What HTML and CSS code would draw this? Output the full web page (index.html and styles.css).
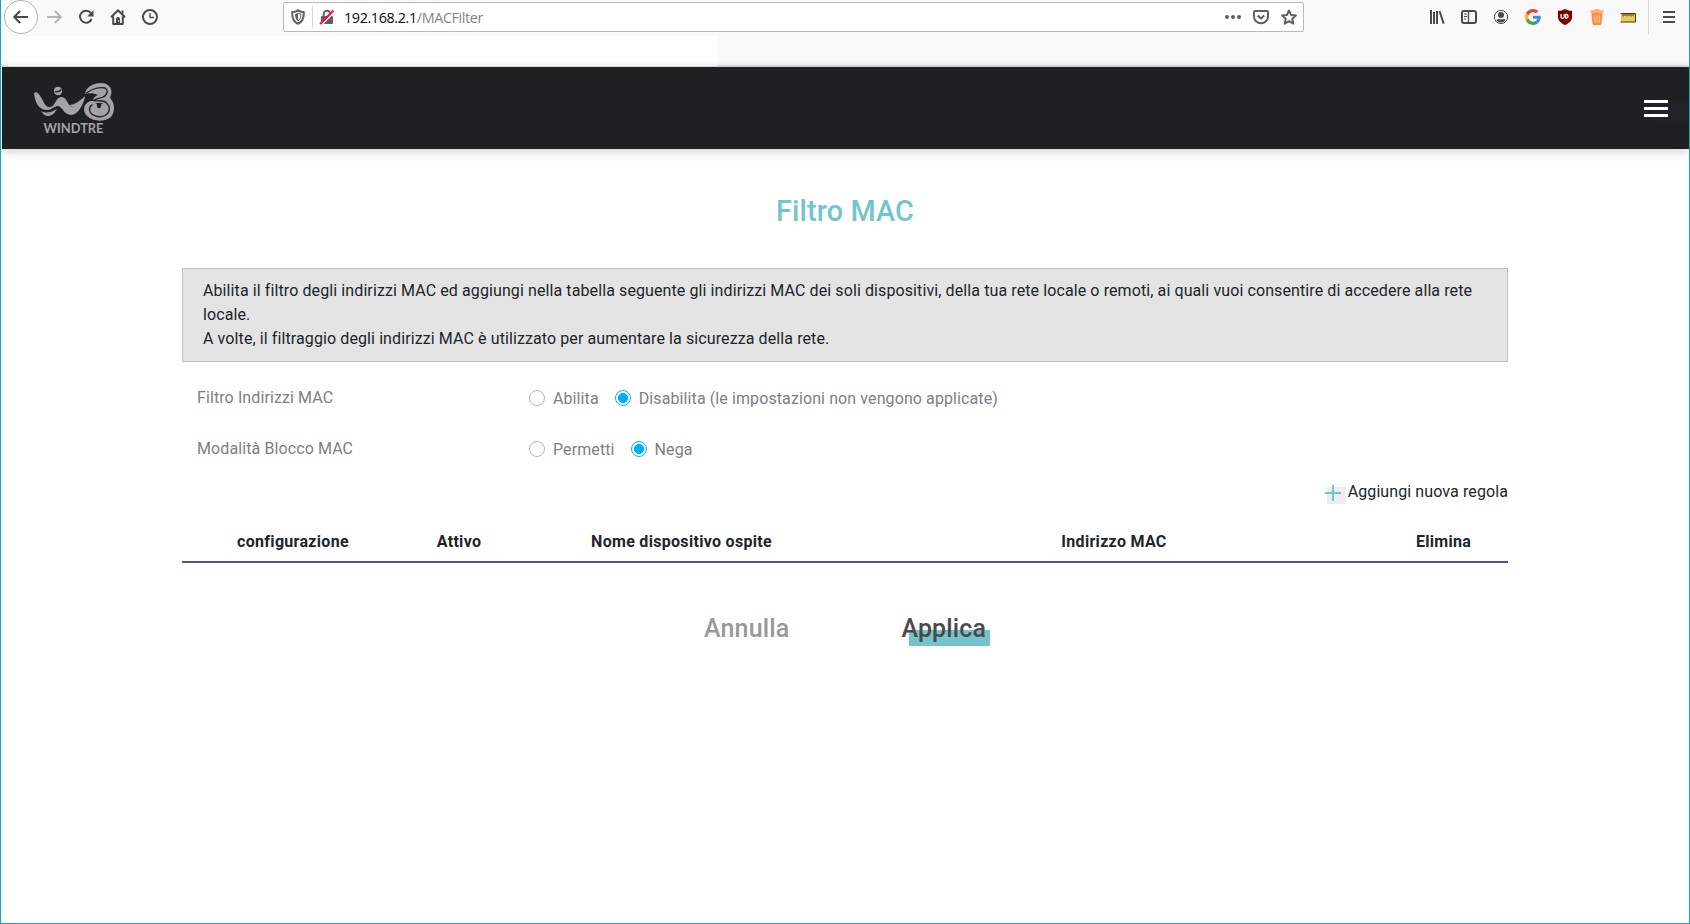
FILE: index.html
```html
<!DOCTYPE html>
<html lang="it">
<head>
<meta charset="utf-8">
<title>Filtro MAC</title>
<link rel="stylesheet" href="styles.css">
</head>
<body>
<div class="window">
  <div class="toolbar">
    <div class="nav">
      <span class="back"><svg width="16" height="16" viewBox="0 0 16 16"><path d="M15 8H1.5M7.2 2L1.2 8l6 6" class="ln"/></svg></span>
      <svg class="fwd" width="16" height="16" viewBox="0 0 16 16"><path d="M1 8h13.5M8.800 2l6 6-6 6" class="ln"/></svg>
      <svg width="16" height="16" viewBox="0 0 16 16"><path d="M12.900 4.200A6 6 0 1 0 13.600 10" class="ln"/><path d="M15.500 1v6.500H9z" fill="#4a4a4a"/></svg>
      <svg width="16" height="16" viewBox="0 0 16 16"><path d="M1 8.300L8 1.300l7 7M3.200 7.500V15h9.600V7.500" class="ln"/><path d="M6 15V9.500q0-1.500 2-1.500t2 1.500V15z" fill="#4a4a4a"/><path d="M11.500 1.500h2v3h-2z" fill="#4a4a4a"/><circle cx="8.700" cy="12" r=".7" fill="#fff"/></svg>
      <svg width="16" height="16" viewBox="0 0 16 16"><circle cx="8" cy="8" r="7" class="ln"/><path d="M8 4v4.500h4" class="ln thin"/></svg>
    </div>
    <div class="urlbar">
      <svg class="shield" width="14" height="16" viewBox="0 0 14 16"><path d="M7 1.300C5 2.600 3 3 1.200 3 1 8.800 2.600 13 7 14.700 11.400 13 13 8.800 12.800 3 11 3 9 2.600 7 1.300z" class="gl"/><path d="M7 4v8C4.600 10.500 4 8 4 5z" fill="#606060"/><path d="M7 4.200C8 4.700 9 5 10 5c0 3-.6 5.500-3 7" fill="none" stroke="#606060"/></svg>
      <span class="sep"></span>
      <svg class="lock" width="16" height="16" viewBox="0 0 16 16"><path d="M4.700 7V5a3.300 3.300 0 0 1 6.600 0v2" class="gl"/><rect x="2" y="7" width="12" height="8" rx="1" fill="#606060"/><path d="M2.500 16L16 2.500" stroke="#fff" stroke-width="1.500"/><path d="M1 15L14.500 1.500" stroke="#ff0f50" stroke-width="2"/></svg>
      <span class="url"><b>192.168.2.1</b>/MACFilter</span>
      <span class="grow"></span>
      <svg class="dots" width="16" height="16" viewBox="0 0 16 16"><circle cx="2" cy="8" r="2"/><circle cx="8" cy="8" r="2"/><circle cx="14" cy="8" r="2"/></svg>
      <svg class="pocket" width="16" height="16" viewBox="0 0 16 16"><path d="M2 2h12q1 0 1 1v4.500a7 6.800 0 0 1-14 0V3q0-1 1-1z" class="gl"/><path d="M4.700 6.500L8 9.600l3.300-3.100" class="gl"/></svg>
      <svg width="16" height="16" viewBox="0 0 16 16"><path d="M8 1.500l2 4.400 4.900.5-3.600 3.300 1 5L8 12.200l-4.300 2.500 1-5L1.100 6.400 6 5.900z" class="gl"/></svg>
    </div>
    <div class="tools">
      <svg width="16" height="16" viewBox="0 0 16 16"><path d="M2 1v14M5 3v12M8 2v13M10.500 2l4.200 12.700" class="ln"/></svg>
      <svg width="16" height="16" viewBox="0 0 16 16"><rect x="1" y="2" width="14" height="12" rx="2" class="ln"/><path d="M7.500 2v12" class="ln thin"/><path d="M3 5h3M3 7.500h3M3 10h2" stroke="#4a4a4a"/></svg>
      <svg width="16" height="16" viewBox="0 0 16 16"><circle cx="8" cy="8" r="6.600" fill="none" stroke="#4a4a4a"/><circle cx="8" cy="6" r="3" fill="#4a4a4a"/><path d="M3.300 10.800C5 9.500 6 9.800 8 10.500c2-.7 3-1 4.700.3A5.500 5.500 0 0 1 3.300 10.800z" fill="#4a4a4a"/></svg>
      <svg width="16" height="16" viewBox="0 0 48 48"><path fill="#ea4335" d="M24 9.500c3.500 0 6.700 1.200 9.200 3.600l6.900-6.900C35.900 2.400 30.500 0 24 0 14.600 0 6.500 5.400 2.600 13.200l8 6.200C12.400 13.700 17.700 9.500 24 9.500z"/><path fill="#4285f4" d="M47 24.500c0-1.600-.2-3.100-.4-4.500H24v9h12.900c-.6 3-2.300 5.500-4.800 7.200l7.700 6C44.400 38 47 31.800 47 24.500z"/><path fill="#fbbc05" d="M10.500 28.600a14.500 14.500 0 0 1 0-9.200l-8-6.200a24 24 0 0 0 0 21.600z"/><path fill="#34a853" d="M24 48c6.500 0 12-2.100 15.900-5.800l-7.700-6c-2.200 1.500-4.900 2.300-8.200 2.300-6.300 0-11.600-4.200-13.500-9.900l-8 6.200C6.500 42.600 14.600 48 24 48z"/></svg>
      <svg width="16" height="16" viewBox="0 0 16 16"><path d="M8 0C6 1.300 3.500 1.800 1 1.800V8c0 4 3.500 6.500 7 8 3.500-1.500 7-4 7-8V1.800C12.500 1.800 10 1.300 8 0z" fill="#800000"/><path d="M4 5v3q0 1.300 1.500 1.300T7.200 8V5" fill="none" stroke="#fff" stroke-width="1.200"/><path d="M8.700 5.300v3.900h.8a2 2 0 0 0 0-3.900z" fill="none" stroke="#fff" stroke-width="1.200"/></svg>
      <svg width="16" height="16" viewBox="0 0 16 16"><path d="M1.500 1.300h4V0h5v1.300h4V4h-13z" fill="#ffb070"/><path d="M2.500 4h11l-1 11q-.2 1-1 1h-7q-.8 0-1-1z" fill="#ff8c42"/><path d="M5.500 6.500l.4 7M8 6.500v7M10.500 6.500l-.4 7" stroke="#ffbf8b" stroke-width="1.200"/></svg>
      <svg class="ruler" width="16" height="16" viewBox="0 0 16 16"><rect x="1" y="4.500" width="14" height="8.500" fill="#e8cb50"/><path d="M.5 4.500h15V13H.5" fill="none" stroke="#3f3820"/><path d="M3 5v2.500M5 5v2M7 5v2.500M9 5v2M11 5v2.500M13 5v2" stroke="#3f3820"/></svg>
      <span class="toolsep"></span>
      <svg class="menu" width="16" height="16" viewBox="0 0 16 16"><path d="M2 3h12M2 8h12M2 13h12" class="ln"/></svg>
    </div>
  </div>
  <div class="bookmarks"><div class="blank"></div></div>
  <header class="site">
    <svg class="logo" width="82" height="52" viewBox="0 0 82 52">
      <g fill="#a3a3a5">
        <path d="M0 10C3 8 5 11 8 16c3 6 5 9 9 8 4-1 5-10 10-10 5 0 6 5 9 9 4 3 9-1 15-9-2 8-7 18-14 18-7 0-9-9-13-9-4 0-6 4-11 4C5 27 1 20 0 10z"/>
        <path d="M7 28c6 3 11 1 16-2-2 3-4 7-9 7-3 0-5-2-7-5zM35 22c6 0 12-5 16-9-1 6-6 11-11 11-2 0-4-1-5-2z"/>
        <circle cx="24" cy="8" r="4.200"/>
        <path d="M51 11C52 4 59 0 67 0c8 0 12 6 10 12-1 2-1 3 0 4 4 5 4 13 0 18-6 5-18 5-24-1-4-4-4-10 0-13 2-2 4-2 6-2 0-3 2-5 5-6-4-2-9-2-13-1z"/>
      </g>
      <path d="M20.500 8.500c3 1 5 0 7-2" fill="none" stroke="#1e2022" stroke-width="1.200"/>
      <path d="M52 10.500C57 6 65 3.500 71 5c4 3 2 8-3 9.500-3 1-6 1-8 3 4 1 9-1 12 2 5 4 4 10-1 13-6 3-15 0-15.500-6 0-2 1-4 3-5" fill="none" stroke="#1e2022" stroke-width="1.300"/>
      <path d="M60 20c3 0 3 1 3 3 0 3 4 3 4 0 0-2 1-3 3-3z" fill="#1e2022"/>
      <text x="9.500" y="49.700" textLength="60" lengthAdjust="spacingAndGlyphs">WINDTRE</text>
    </svg>
    <div class="burger"><i></i><i></i><i></i></div>
  </header>
  <main>
    <h1>Filtro MAC</h1>
    <div class="info">Abilita il filtro degli indirizzi MAC ed aggiungi nella tabella seguente gli indirizzi MAC dei soli dispositivi, della tua rete locale o remoti, ai quali vuoi consentire di accedere alla rete locale.<br>A volte, il filtraggio degli indirizzi MAC è utilizzato per aumentare la sicurezza della rete.</div>
    <div class="row">
      <span class="label">Filtro Indirizzi MAC</span>
      <span class="radio"></span><span class="opt">Abilita</span>
      <span class="radio on"></span><span class="opt">Disabilita (le impostazioni non vengono applicate)</span>
    </div>
    <div class="row second">
      <span class="label">Modalità Blocco MAC</span>
      <span class="radio"></span><span class="opt">Permetti</span>
      <span class="radio on"></span><span class="opt">Nega</span>
    </div>
    <div class="add"><svg width="21" height="19" viewBox="0 0 21 19"><path d="M2 2h19v17H2z" fill="#ededed"/><path d="M0 8h16M8 0v16" stroke="#73c5cb" stroke-width="2"/></svg><span>Aggiungi nuova regola</span></div>
    <div class="thead"><span>configurazione</span><span>Attivo</span><span>Nome dispositivo ospite</span><span>Indirizzo MAC</span><span>Elimina</span></div>
    <div class="actions"><span class="cancel">Annulla</span><span class="apply">Applica</span></div>
  </main>
</div>
</body>
</html>
```

FILE: styles.css
```css
* { box-sizing: border-box; }
body { margin: 0; background: #fff; font: 16px/24px Roboto, sans-serif; color: #212529; }
.window { height: 924px; border: 1px solid #1ba1bf; border-top: 0; overflow: hidden; display: flex; flex-direction: column; }
svg { display: block; flex: none; }
.ln { fill: none; stroke: #4a4a4a; stroke-width: 2; stroke-linejoin: round; }
.thin { stroke-width: 1.3; }
.gl { fill: none; stroke: #606060; stroke-width: 2; stroke-linejoin: round; }
.toolbar { height: 36px; flex: none; background: #f9f9fa; display: flex; align-items: flex-start; }
.nav { width: 282px; display: flex; gap: 16px; padding: 9px 0 0 3px; }
.back { width: 34px; height: 34px; margin: -9px -8px 0 0; border: 1px solid #b5b5b5; border-radius: 50%; background: #fff; display: flex; align-items: center; justify-content: center; }
.fwd { opacity: .38; }
.urlbar { width: 1021px; height: 30px; margin-top: 2px; background: #fff; border: 1px solid #b9b9b9; border-radius: 2px; display: flex; align-items: center; padding: 0 6px 0 7px; }
.sep { width: 1px; height: 22px; background: #d7d7db; margin: 0 7px; }
.lock { margin-left: -1px; }
.url { font: 14.4px/20px "Open Sans", "Noto Sans", sans-serif; color: #858585; margin-left: 9px; padding-top: 2px; letter-spacing: -.4px; }
.url b { font-weight: 400; color: #0c0c0d; }
.grow { flex: 1; }
.dots { fill: #606060; margin-right: 12px; }
.pocket { margin-right: 12px; }
.tools { display: flex; gap: 16px; padding: 9px 0 0 125px; }
.ruler { margin-left: -1px; }
.toolsep { width: 1px; height: 34px; background: #d7d7db; margin: -9px -4px 0 -4px; }
.bookmarks { height: 31px; flex: none; background: #f9f9fa; border-bottom: 2px solid #e0e3e3; display: flex; padding-left: 7px; }
.blank { width: 709px; height: 30px; background: #fff; }
.site { height: 82px; flex: none; margin: 0 0 0 1px; background: linear-gradient(#20242a, #20242a) right 1px top 36px / 35px 18px no-repeat #1e2022; box-shadow: 0 2px 10px rgba(0,0,0,.2); display: flex; justify-content: space-between; padding: 16px 21px 0 32px; }
.logo text { font: 700 12.5px Lato, sans-serif; fill: #a3a3a5; }
.burger { width: 24px; padding-top: 17px; display: flex; flex-direction: column; gap: 4px; }
.burger i { height: 3px; background: #fff; }
main { width: 1326px; margin: 43px 0 0 181px; letter-spacing: .1px; }
h1 { margin: 0 0 37px; height: 39px; font-weight: 500; font-size: 28.8px; line-height: 39px; text-align: center; color: #73c5cb; letter-spacing: .15px; }
.info { height: 94px; background: #e4e4e4; border: 1px solid #c0c0c0; padding: 10px 20px; }
.row { display: flex; align-items: center; height: 24px; margin-top: 25px; padding-left: 15px; color: #808080; }
.row.second { margin-top: 27px; }
.label { width: 332px; position: relative; top: -1px; }
.radio { width: 16px; height: 16px; border: 1px solid #b5b5b5; border-radius: 50%; margin-right: 8px; position: relative; top: -1px; }
.radio.on { border-color: #00b0ff; background: radial-gradient(circle, #00b0ff 4.7px, #fff 5.3px); }
.opt { margin-right: 16px; }
.add { display: flex; justify-content: flex-end; margin-top: 18px; height: 24px; }
.add svg { margin: 5px 2px 0 0; }
.thead { margin-top: 26px; height: 33px; border-bottom: 2px solid #47559b; display: grid; grid-template-columns: 222px 110px 335px 530px 129px; text-align: center; font-weight: 700; letter-spacing: .3px; }
.actions { display: flex; margin-top: 49px; font-size: 25px; line-height: 34px; font-weight: 500; padding-left: 522px; gap: 112px; letter-spacing: .15px; }
.cancel { color: #999; }
.apply { color: #4a4a4a; background: linear-gradient(#73c5cb, #73c5cb) 8px 18px / 81px 16px no-repeat; padding-right: 8px; }
```
